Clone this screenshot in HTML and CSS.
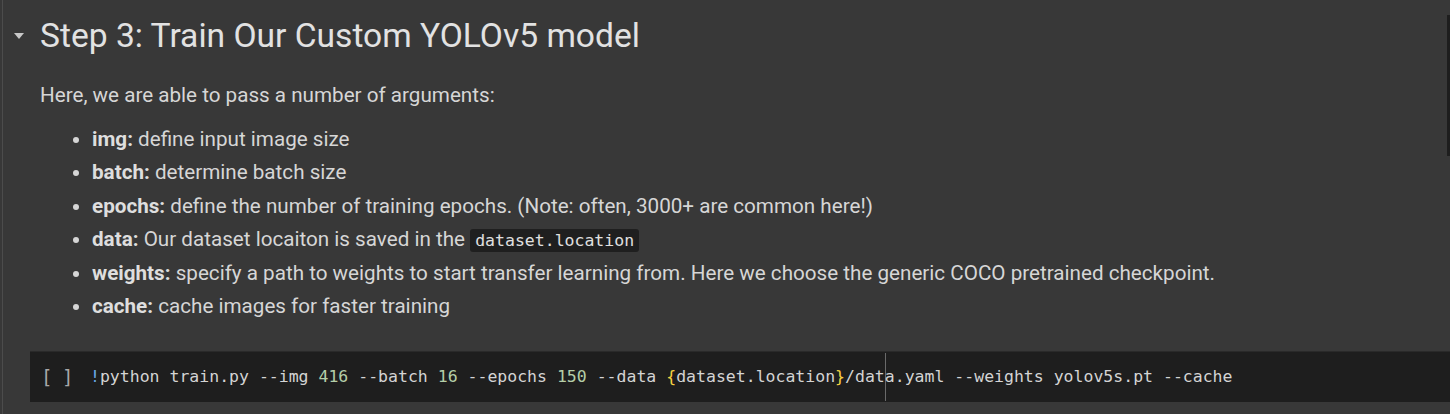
FILE: index.html
```html
<!DOCTYPE html>
<html>
<head>
<meta charset="utf-8">
<link rel="stylesheet" href="styles.css">
</head>
<body>
<div class="page">
  <div class="rail"></div>
  <div class="main">
    <div class="heading-row">
      <svg class="caret" width="12" height="8" viewBox="0 0 12 8"><path d="M1 1 L11 1 L6 7 Z" fill="#c8c8c8"/></svg>
      <h1 class="title">Step 3: Train Our Custom YOLOv5 model</h1>
    </div>
    <p class="intro">Here, we are able to pass a number of arguments:</p>
    <ul class="args">
      <li><b>img:</b> define input image size</li>
      <li><b>batch:</b> determine batch size</li>
      <li><b>epochs:</b> define the number of training epochs. (Note: often, 3000+ are common here!)</li>
      <li><b>data:</b> Our dataset locaiton is saved in the <code class="inline">dataset.location</code></li>
      <li><b>weights:</b> specify a path to weights to start transfer learning from. Here we choose the generic COCO pretrained checkpoint.</li>
      <li><b>cache:</b> cache images for faster training</li>
    </ul>
    <div class="code-cell">
      <span class="run">[ ]</span>
      <pre class="code"><span class="bang">!</span>python train.py --img <span class="num">416</span> --batch <span class="num">16</span> --epochs <span class="num">150</span> --data <span class="brace">{</span>dataset.location<span class="brace">}</span>/dat<span class="cursor"></span>a.yaml --weights yolov5s.pt --cache</pre>
    </div>
  </div>
  <div class="scrollbar"></div>
</div>
</body>
</html>
```
FILE: styles.css
```css
html, body {
  margin: 0;
  padding: 0;
  background: #383838;
  height: 100%;
  overflow: hidden;
}
.page {
  display: flex;
  height: 414px;
  position: relative;
  font-family: Roboto, "Noto Sans", sans-serif;
  color: #d6d6d6;
}
.rail {
  width: 1px;
  margin-left: 2px;
  background: #4c4c4c;
  flex: none;
}
.main {
  flex: 1;
  display: flex;
  flex-direction: column;
  padding-left: 9px;
}
.heading-row {
  display: flex;
  align-items: center;
  height: 70px;
}
.caret {
  margin-left: 1px;
  margin-right: 15px;
  margin-top: 2px;
}
.title {
  margin: 0;
  font-weight: 400;
  font-size: 33.6px;
  color: #e2e2e2;
}
.intro {
  margin: 10px 0 0 28px;
  font-size: 20.65px;
  line-height: 30px;
}
.args {
  margin: 13px 0 0 28px;
  padding-left: 52px;
  font-size: 20.65px;
  line-height: 33.3px;
}
.args b {
  font-weight: 700;
  color: #dedede;
}
.inline {
  font-family: "DejaVu Sans Mono", monospace;
  font-size: 16.5px;
  background: #1f1f1f;
  padding: 2px 5px;
  border-radius: 3px;
  color: #e0e0e0;
}
.code-cell {
  margin-top: 27px;
  margin-left: 18px;
  margin-right: -9px;
  height: 50px;
  background: #1e1e1e;
  border-top: 1px solid #2a2a2a;
  display: flex;
  align-items: center;
}
.run {
  font-family: "DejaVu Sans Mono", monospace;
  font-size: 19px;
  color: #a8a8a8;
  margin-left: 11px;
  width: 49px;
  white-space: pre;
  letter-spacing: -1px;
}
.code {
  margin: 0;
  font-family: "DejaVu Sans Mono", monospace;
  font-size: 16.5px;
  color: #d4d4d4;
  line-height: 50px;
}
.bang { color: #6aa8e8; }
.num { color: #b5cea8; }
.brace { color: #f5d142; }
.cursor {
  display: inline-block;
  width: 1px;
  height: 48px;
  background: #6a6a6a;
  vertical-align: middle;
  margin-right: -1px;
}
.scrollbar {
  position: absolute;
  right: 0;
  top: 15px;
  width: 3px;
  height: 141px;
  background: #1e1e1e;
}
```
